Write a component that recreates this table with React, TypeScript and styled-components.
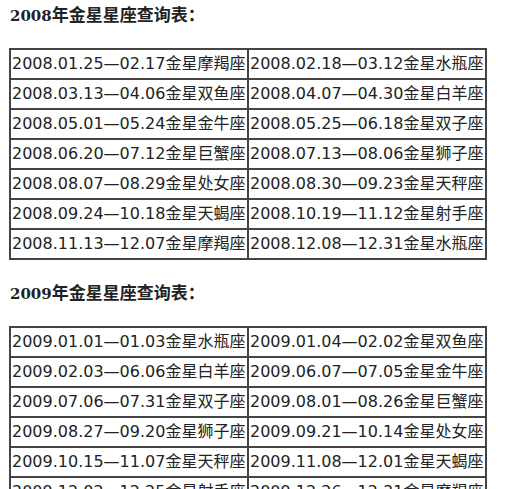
import React from "react";
import styled, { createGlobalStyle } from "styled-components";

const Global = createGlobalStyle`
  html, body { margin: 0; padding: 0; background: #ffffff; }
  body { font-family: "DejaVu Sans", "Noto Sans CJK SC", sans-serif; color: #222; }
`;

const Page = styled.div`
  display: flex;
  flex-direction: column;
  padding: 2px 0 0 9px;
`;

const Heading = styled.h3`
  margin: 0 0 20px 1px;
  font-family: "Noto Sans CJK SC", sans-serif;
  font-size: 17px;
  line-height: 24px;
  font-weight: bold;
  color: #222;
`;

const YearNum = styled.span`
  font-family: "DejaVu Serif", serif;
  font-size: 15px;
  font-weight: bold;
`;

const Table = styled.table`
  border: 1px solid #444;
  border-collapse: separate;
  border-spacing: 0;
  margin-bottom: 20px;
  width: 478px;
`;

const Cell = styled.td`
  border: 1px solid #444;
  padding: 5px 1px;
  font-family: "DejaVu Sans", "Noto Sans CJK SC", sans-serif;
  font-size: 16px;
  line-height: 18px;
  color: #222;
  white-space: nowrap;
  width: 50%;
`;

const data2008: [string, string][] = [
  ["2008.01.25—02.17金星摩羯座", "2008.02.18—03.12金星水瓶座"],
  ["2008.03.13—04.06金星双鱼座", "2008.04.07—04.30金星白羊座"],
  ["2008.05.01—05.24金星金牛座", "2008.05.25—06.18金星双子座"],
  ["2008.06.20—07.12金星巨蟹座", "2008.07.13—08.06金星狮子座"],
  ["2008.08.07—08.29金星处女座", "2008.08.30—09.23金星天秤座"],
  ["2008.09.24—10.18金星天蝎座", "2008.10.19—11.12金星射手座"],
  ["2008.11.13—12.07金星摩羯座", "2008.12.08—12.31金星水瓶座"],
];

const data2009: [string, string][] = [
  ["2009.01.01—01.03金星水瓶座", "2009.01.04—02.02金星双鱼座"],
  ["2009.02.03—06.06金星白羊座", "2009.06.07—07.05金星金牛座"],
  ["2009.07.06—07.31金星双子座", "2009.08.01—08.26金星巨蟹座"],
  ["2009.08.27—09.20金星狮子座", "2009.09.21—10.14金星处女座"],
  ["2009.10.15—11.07金星天秤座", "2009.11.08—12.01金星天蝎座"],
  ["2009.12.02—12.25金星射手座", "2009.12.26—12.31金星摩羯座"],
];

const YearTable = ({ rows }: { rows: [string, string][] }) => (
  <Table>
    <tbody>
      {rows.map((r, i) => (
        <tr key={i}>
          <Cell>{r[0]}</Cell>
          <Cell>{r[1]}</Cell>
        </tr>
      ))}
    </tbody>
  </Table>
);

export default function App() {
  return (
    <>
      <Global />
      <Page>
        <Heading>
          <YearNum>2008</YearNum>年金星星座查询表：
        </Heading>
        <YearTable rows={data2008} />
        <Heading>
          <YearNum>2009</YearNum>年金星星座查询表：
        </Heading>
        <YearTable rows={data2009} />
      </Page>
    </>
  );
}
